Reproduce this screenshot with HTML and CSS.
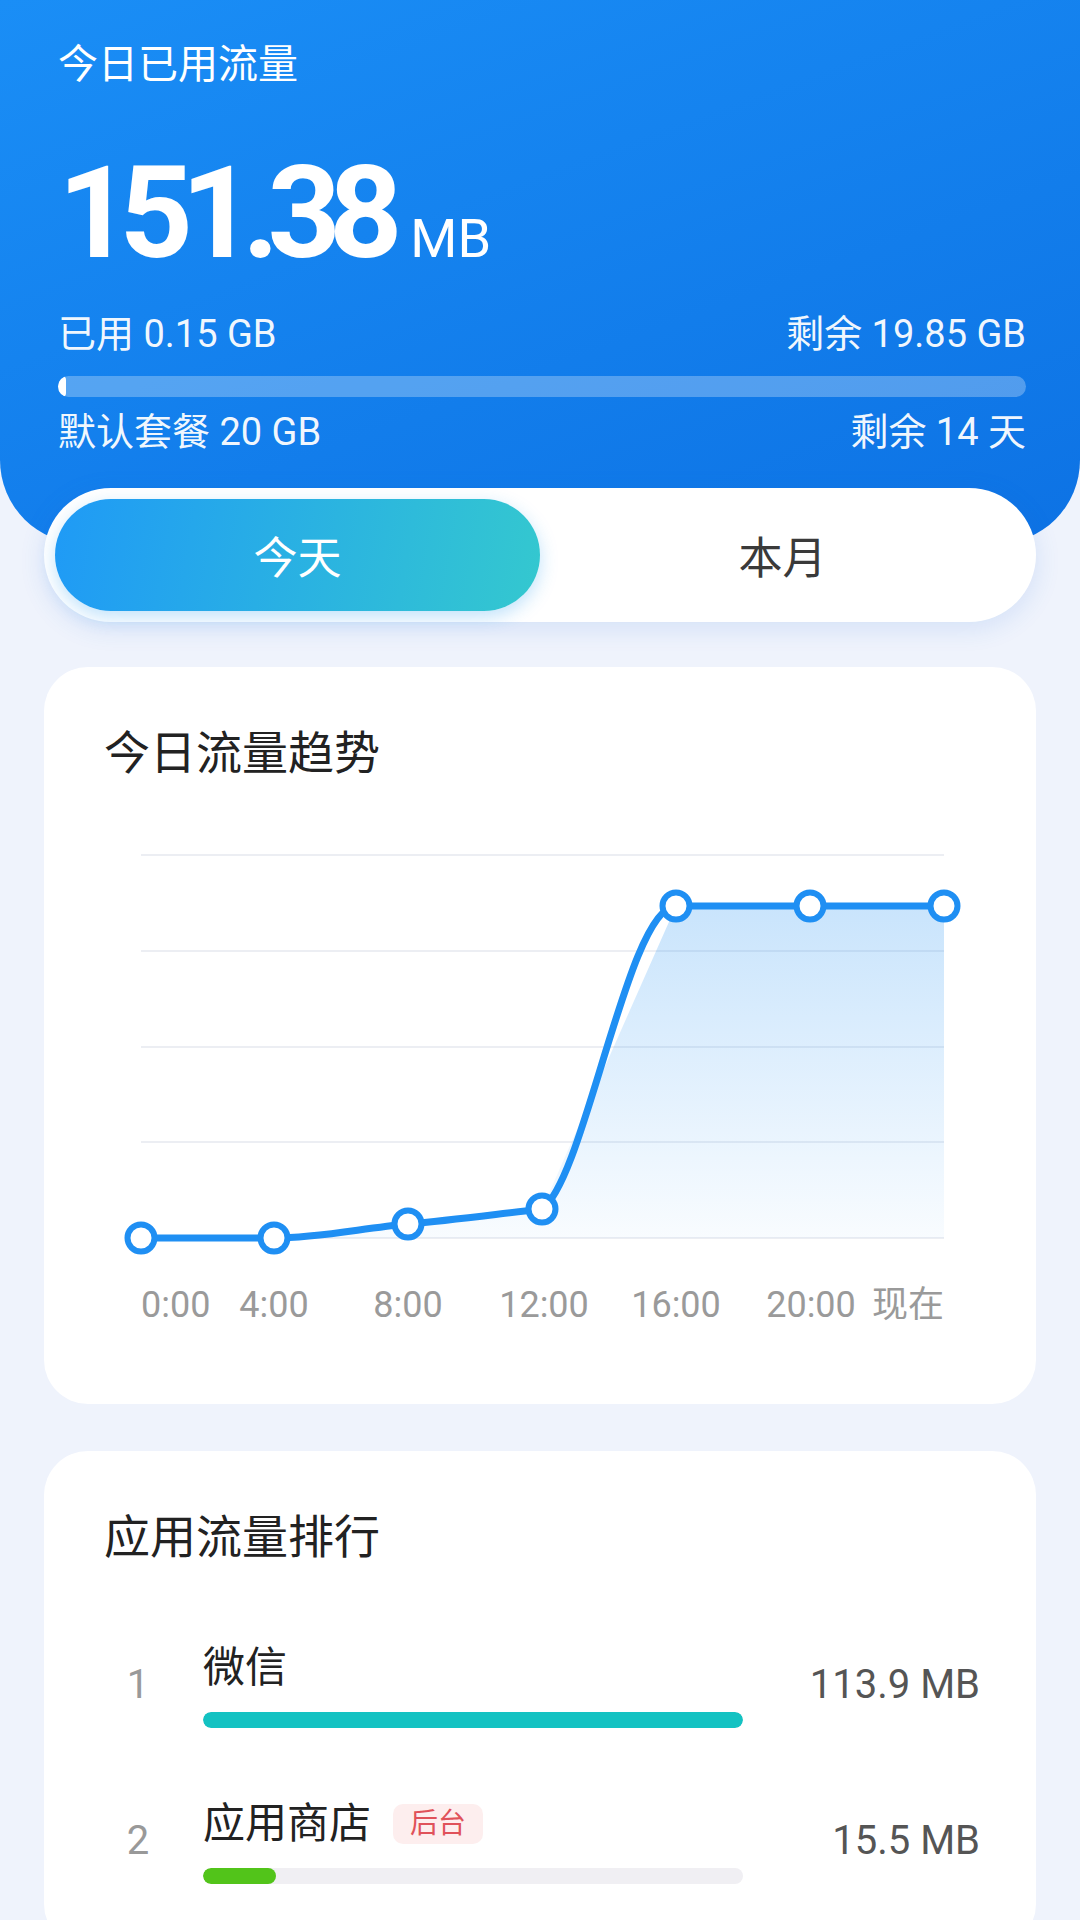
FILE: index.html
```html
<!DOCTYPE html>
<html lang="zh-CN">
<head>
    <meta charset="UTF-8">
    <meta name="viewport" content="width=device-width, initial-scale=1">
    <title>流量统计</title>
    <link rel="stylesheet" href="styles.css">
</head>
<body>
    <header class="head">
        <div class="head-title">今日已用流量</div>
        <div class="usage"><span class="usage-num">151.38</span><span class="usage-unit">MB</span></div>
        <div class="head-row"><span>已用 0.15 GB</span><span>剩余 19.85 GB</span></div>
        <div class="quota"><div class="quota-fill" style="width:0.75%"></div></div>
        <div class="head-row head-row-sub"><span>默认套餐 20 GB</span><span>剩余 14 天</span></div>
    </header>

    <main class="main">
        <div class="tabs">
            <div class="tab active">今天</div>
            <div class="tab">本月</div>
        </div>

        <section class="card">
            <h2 class="card-title">今日流量趋势</h2>
            <svg class="chart" width="872" height="540" viewBox="0 0 872 540">
                <defs>
                    <linearGradient id="area" x1="0" y1="0" x2="0" y2="1">
                        <stop offset="0" stop-color="#1e8ff3" stop-opacity="0.24"/>
                        <stop offset="1" stop-color="#1e8ff3" stop-opacity="0.03"/>
                    </linearGradient>
                </defs>
                <g class="grid">
                    <line x1="37" y1="55" x2="840" y2="55"/>
                    <line x1="37" y1="151" x2="840" y2="151"/>
                    <line x1="37" y1="247" x2="840" y2="247"/>
                    <line x1="37" y1="342" x2="840" y2="342"/>
                    <line x1="37" y1="438" x2="840" y2="438"/>
                </g>
                <path d="M37 438 L170 438 L304 424 L438 409 L572 106 L706 106 L840 106 L840 438 Z" fill="url(#area)"/>
                <path class="line" d="M37 438 L170 438 C215 438 259 428 304 424 C349 420 393 414 438 409 C481 380 524 106 572 106 L840 106"/>
                <g class="dots">
                    <circle cx="37" cy="438" r="13.5"/>
                    <circle cx="170" cy="438" r="13.5"/>
                    <circle cx="304" cy="424" r="13.5"/>
                    <circle cx="438" cy="409" r="13.5"/>
                    <circle cx="572" cy="106" r="13.5"/>
                    <circle cx="706" cy="106" r="13.5"/>
                    <circle cx="840" cy="106" r="13.5"/>
                </g>
                <g class="labels">
                    <text x="37" y="517" text-anchor="start">0:00</text>
                    <text x="170" y="517" text-anchor="middle">4:00</text>
                    <text x="304" y="517" text-anchor="middle">8:00</text>
                    <text x="440" y="517" text-anchor="middle">12:00</text>
                    <text x="572" y="517" text-anchor="middle">16:00</text>
                    <text x="707" y="517" text-anchor="middle">20:00</text>
                    <text x="840" y="517" text-anchor="end">现在</text>
                </g>
            </svg>
        </section>

        <section class="card card-rank">
            <h2 class="card-title">应用流量排行</h2>
            <ul class="app-list">
                <li class="app">
                    <span class="app-rank">1</span>
                    <div class="app-info">
                        <div class="app-name">微信</div>
                        <div class="app-bar"><div class="app-bar-fill teal" style="width:100%"></div></div>
                    </div>
                    <span class="app-size">113.9 MB</span>
                </li>
                <li class="app">
                    <span class="app-rank">2</span>
                    <div class="app-info">
                        <div class="app-name">应用商店<span class="tag">后台</span></div>
                        <div class="app-bar"><div class="app-bar-fill green" style="width:13.6%"></div></div>
                    </div>
                    <span class="app-size">15.5 MB</span>
                </li>
            </ul>
        </section>
    </main>
</body>
</html>
```

FILE: styles.css
```css
*{
    margin: 0;
    padding: 0;
    box-sizing: border-box;
    list-style: none;
}
body{
    background-color: #eff3fc;
    font-family: Roboto, "Noto Sans CJK SC", sans-serif;
    color: #333333;
}

/* 顶部蓝色区域 */
.head{
    height: 544px;
    padding: 37px 54px 0 58px;
    background: linear-gradient(160deg, #1a8ef6 0%, #0d72e4 100%);
    border-radius: 0 0 84px 84px;
    color: #ffffff;
}
.head-title{
    font-size: 40px;
    line-height: 56px;
}
.usage{
    margin-top: 56px;
    height: 128px;
    font-size: 128px;
    line-height: 128px;
    white-space: nowrap;
}
.usage-num{
    font-weight: 700;
    letter-spacing: -12px;
}
.usage-unit{
    font-size: 54px;
    line-height: 1;
    margin-left: 20px;
}
.head-row{
    display: flex;
    justify-content: space-between;
    margin-top: 33px;
    font-size: 38px;
    line-height: 48px;
    color: rgba(255,255,255,0.94);
}
.head-row-sub{
    margin-top: 11px;
}
.quota{
    margin-top: 18px;
    height: 21px;
    border-radius: 11px;
    background-color: rgba(255,255,255,0.28);
    overflow: hidden;
}
.quota-fill{
    height: 100%;
    min-width: 8px;
    border-radius: 11px;
    background-color: #ffffff;
}

.main{
    margin-top: -56px;
    padding: 0 44px 60px;
}

/* 今天 / 本月 切换 */
.tabs{
    display: flex;
    height: 134px;
    padding: 11px;
    background-color: #ffffff;
    border-radius: 67px;
    box-shadow: 0 6px 26px rgba(40,110,220,0.14);
}
.tab{
    flex: 1;
    display: flex;
    align-items: center;
    justify-content: center;
    font-size: 44px;
    color: #3a3a3a;
    border-radius: 56px;
}
.tab.active{
    color: #ffffff;
    background: linear-gradient(100deg, #1f9af6 0%, #34c8cf 100%);
    box-shadow: 0 6px 18px rgba(30,150,240,0.28);
}

/* 卡片 */
.card{
    margin-top: 45px;
    padding: 56px 60px 64px;
    background-color: #ffffff;
    border-radius: 44px;
}
.card-rank{
    margin-top: 47px;
}
.card-title{
    font-size: 46px;
    font-weight: 400;
    line-height: 60px;
    color: #222222;
}

/* 折线图 */
.chart{
    display: block;
    margin-top: 17px;
    overflow: visible;
}
.grid line{
    stroke: #eceef3;
    stroke-width: 2;
}
.line{
    fill: none;
    stroke: #1f8ff3;
    stroke-width: 7;
    stroke-linejoin: round;
}
.dots circle{
    fill: #ffffff;
    stroke: #1f8ff3;
    stroke-width: 6;
}
.labels text{
    font-family: Roboto, "Noto Sans CJK SC", sans-serif;
    font-size: 36px;
    fill: #9a9a9a;
}

/* 应用排行 */
.app-list{
    margin: 73px -4px 0 0;
}
.app{
    display: grid;
    grid-template-columns: 68px 540px 1fr;
    column-gap: 31px;
    align-items: center;
}
.app + .app{
    margin-top: 68px;
}
.app-rank{
    font-size: 40px;
    color: #999999;
    text-align: center;
}
.app-name{
    display: flex;
    align-items: center;
    font-size: 42px;
    line-height: 56px;
    color: #222222;
}
.tag{
    margin-left: 22px;
    padding: 0 17px;
    height: 40px;
    line-height: 40px;
    font-size: 28px;
    color: #e0525a;
    background-color: #fdeeee;
    border-radius: 10px;
}
.app-bar{
    margin-top: 16px;
    height: 16px;
    border-radius: 8px;
    background-color: #f0eff3;
    overflow: hidden;
}
.app-bar-fill{
    height: 100%;
    border-radius: 8px;
}
.teal{
    background-color: #13c2c2;
}
.green{
    background-color: #52c41a;
}
.app-size{
    font-size: 40px;
    color: #555555;
    text-align: right;
}
```
